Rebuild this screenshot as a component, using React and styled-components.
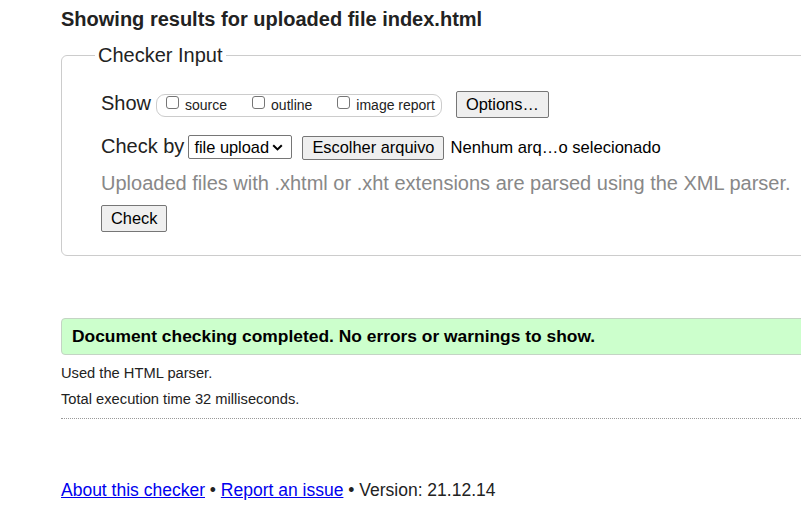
import React from "react";
import styled, { createGlobalStyle } from "styled-components";

const GlobalStyle = createGlobalStyle`
  html, body {
    margin: 0;
    padding: 0;
    background: #fff;
    overflow: hidden;
  }
  body {
    font-family: "Liberation Sans", Arial, sans-serif;
    color: #222;
  }
`;

const Page = styled.main`
  width: 760px;
  padding: 8px 0 0 61px;
`;

const Title = styled.h2`
  margin: 0;
  font-size: 20px;
  line-height: 23px;
  font-weight: bold;
`;

const InputSet = styled.fieldset`
  margin: 13px 0 0;
  padding: 24px 20px 23px 39px;
  border: 1px solid #ccc;
  border-radius: 6px;
  min-width: 0;
`;

const Legend = styled.legend`
  margin-left: -6px;
  padding: 0 3px;
  font-size: 20px;
  line-height: 23px;
`;

const Row = styled.div`
  display: flex;
  align-items: baseline;
  margin-top: ${(p) => p.$gap || 0}px;
`;

const Label = styled.span`
  font-size: 20px;
  line-height: 23px;
  margin-right: ${(p) => p.$space || 0}px;
`;

const OptionGroup = styled.span`
  display: inline-block;
  border: 1px solid #ccc;
  border-radius: 9px;
  padding: 0 6px 0 9px;
  font-size: 14px;
  line-height: 21px;
  margin-right: 14px;
`;

const Option = styled.label`
  & + & {
    margin-left: 25px;
  }
`;

const Box = styled.input.attrs({ type: "checkbox" })`
  appearance: none;
  box-sizing: border-box;
  width: 13px;
  height: 13px;
  margin: 0 6px 1px 0;
  border: 1px solid #767676;
  border-radius: 3px;
  background: #fff;
  vertical-align: baseline;
`;

const Button = styled.button`
  box-sizing: border-box;
  height: ${(p) => (p.$compact ? 24 : 27)}px;
  font-family: inherit;
  font-size: 16.4px;
  line-height: 19px;
  padding: 0 9px;
  border: 1px solid #767676;
  border-radius: 2px;
  background: #efefef;
  color: #000;
  margin-right: ${(p) => p.$space || 0}px;
`;

const SelectWrap = styled.span`
  position: relative;
  display: inline-block;
  margin-right: 10px;
`;

const Select = styled.select`
  appearance: none;
  font-family: inherit;
  font-size: 16.4px;
  line-height: 18px;
  width: 104px;
  padding: 2px 20px 2px 5px;
  border: 1px solid #767676;
  border-radius: 2px;
  background: #fff;
  color: #000;
`;

const Chevron = styled.svg`
  position: absolute;
  right: 9px;
  top: 9px;
  pointer-events: none;
`;

const FileName = styled.span`
  font-size: 16.6px;
  color: #000;
`;

const Hint = styled.p`
  margin: 12px 0 0;
  font-size: 20px;
  line-height: 23px;
  color: #888;
`;

const Success = styled.p`
  margin: 62px 0 0;
  padding: 7px 10px 8px;
  border: 1px solid #c4d4c4;
  border-radius: 4px;
  background: #ccffcc;
  font-size: 17.4px;
  line-height: 20px;
  font-weight: bold;
  color: #000;
`;

const Detail = styled.p`
  margin: ${(p) => p.$top}px 0 0;
  font-size: 14.7px;
  line-height: 17px;
`;

const Rule = styled.hr`
  margin: 10px 0 0;
  border: 0;
  border-top: 1px dotted #999;
`;

const Footer = styled.p`
  margin: 61px 0 0;
  font-size: 17.5px;
  line-height: 20px;

  a {
    color: #0000ee;
  }
`;

export default function App() {
  return (
    <>
      <GlobalStyle />
      <Page>
        <Title>Showing results for uploaded file index.html</Title>

        <InputSet>
          <Legend>Checker Input</Legend>
          <Row>
            <Label $space={5}>Show</Label>
            <OptionGroup>
              <Option>
                <Box />
                source
              </Option>
              <Option>
                <Box />
                outline
              </Option>
              <Option>
                <Box />
                image report
              </Option>
            </OptionGroup>
            <Button>Options…</Button>
          </Row>

          <Row $gap={17}>
            <Label $space={4}>Check by</Label>
            <SelectWrap>
              <Select defaultValue="file">
                <option value="file">file upload</option>
                <option value="address">address</option>
                <option value="text">text input</option>
              </Select>
              <Chevron width="11" height="7" viewBox="0 0 11 7">
                <path d="M1.2 1.2 L5.5 5.4 L9.8 1.2" fill="none" stroke="#000" strokeWidth="2" />
              </Chevron>
            </SelectWrap>
            <Button $compact $space={6}>
              Escolher arquivo
            </Button>
            <FileName>Nenhum arq…o selecionado</FileName>
          </Row>

          <Hint>Uploaded files with .xhtml or .xht extensions are parsed using the XML parser.</Hint>

          <Row $gap={10}>
            <Button>Check</Button>
          </Row>
        </InputSet>

        <Success>Document checking completed. No errors or warnings to show.</Success>
        <Detail $top={10}>Used the HTML parser.</Detail>
        <Detail $top={9}>Total execution time 32 milliseconds.</Detail>
        <Rule />

        <Footer>
          <a href="#about">About this checker</a> • <a href="#issue">Report an issue</a> • Version: 21.12.14
        </Footer>
      </Page>
    </>
  );
}
